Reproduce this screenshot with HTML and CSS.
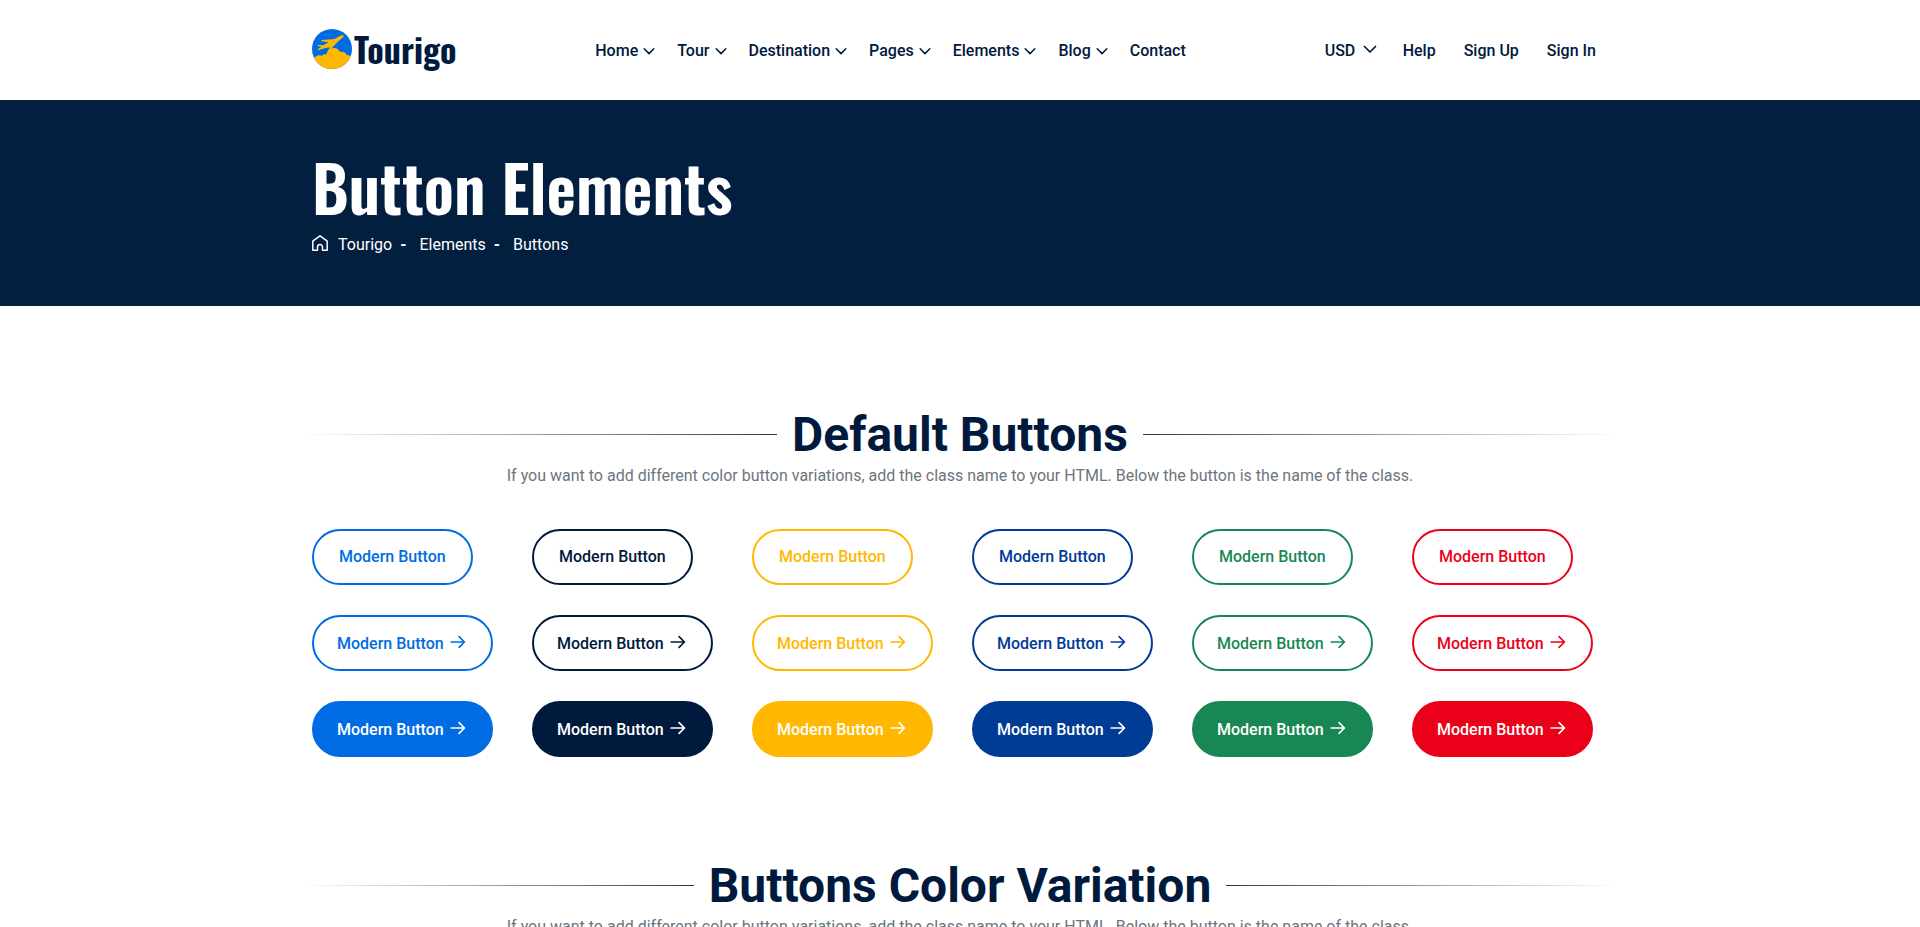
FILE: index.html
```
<!DOCTYPE html>
<html lang="en">
<head>
<meta charset="utf-8">
<meta name="viewport" content="width=device-width, initial-scale=1">
<title>Tourigo - Button Elements</title>
<link rel="stylesheet" href="styles.css">
</head>
<body>
<svg class="sprite" aria-hidden="true">
  <symbol id="chevron" viewBox="0 0 16 16"><path d="M2.5 5.5 8 11l5.500-5.500" fill="none" stroke="currentColor" stroke-width="1.700" stroke-linecap="round" stroke-linejoin="round"/></symbol>
  <symbol id="arrow" viewBox="0 0 16 16"><path d="M1.200 8H14.400M9.100 2.700 14.400 8 9.100 13.300" fill="none" stroke="currentColor" stroke-width="1.700" stroke-linecap="round" stroke-linejoin="round"/></symbol>
</svg>

<header class="header">
  <div class="container header-row">
    <a class="logo" href="#">
      <svg class="logo-mark" viewBox="0 0 40 40" aria-hidden="true">
        <defs><clipPath id="disc"><circle cx="20" cy="20" r="20"/></clipPath></defs>
        <g clip-path="url(#disc)">
          <rect width="40" height="40" fill="#006ce4"/>
          <path fill="#ffb700" d="M0 29.500C3 28 4 27 6 26.500c1.500-.500 3 0 4 .200 1-1.200 3-1.600 4.500-1.200C15 21 19 18.500 23 19c3 .500 4.500 2.500 5 4 3-1 6 .500 6.500 2.800 2 .200 3.500 1 5.500 2.500V40H0z"/>
          <path fill="#ffb700" d="M31.500 6.300c-1-.300-2.500.200-3.700.800l-5.300 3-12.700.9-1 .9 7.700 1.300-5.200 3.100-5.300-.300-.700.700 4.100 1.200-4.200 2.700 1.300.500 8-2.300 3.700-.400-2.700 3.500 1.500.100 9.300-9.800 4-3.100c1.200-1 1.800-2.300 1.200-2.800z"/>
        </g>
      </svg>
      <span class="logo-text">Tourigo</span>
    </a>
    <nav class="nav" aria-label="Main">
      <a href="#">Home <svg><use href="#chevron"/></svg></a>
      <a href="#">Tour <svg><use href="#chevron"/></svg></a>
      <a href="#">Destination <svg><use href="#chevron"/></svg></a>
      <a href="#">Pages <svg><use href="#chevron"/></svg></a>
      <a href="#">Elements <svg><use href="#chevron"/></svg></a>
      <a href="#">Blog <svg><use href="#chevron"/></svg></a>
      <a href="#">Contact</a>
    </nav>
    <div class="account">
      <label class="currency">
        <select aria-label="Currency"><option>USD</option></select>
        <svg><use href="#chevron"/></svg>
      </label>
      <a href="#">Help</a>
      <a href="#">Sign Up</a>
      <a href="#">Sign In</a>
    </div>
  </div>
</header>

<main>
  <section class="banner">
    <div class="container">
      <h1>Button Elements</h1>
      <nav class="crumbs" aria-label="Breadcrumb">
        <svg viewBox="0 0 16 16" aria-hidden="true"><path d="M8 .8.8 6.200v9h4.700V12a2.500 2.500 0 0 1 5 0v3.200h4.700v-9z" fill="none" stroke="currentColor" stroke-width="1.500" stroke-linejoin="round"/></svg>
        <a href="#">Tourigo</a><span class="dash">-</span>
        <a href="#">Elements</a><span class="dash">-</span>
        <span>Buttons</span>
      </nav>
    </div>
  </section>

  <section class="section">
    <h2>Default Buttons</h2>
    <p>If you want to add different color button variations, add the class name to your HTML. Below the button is the name of the class.</p>
    <div class="container button-grid">
      <button class="btn blue">Modern Button</button>
      <button class="btn navy">Modern Button</button>
      <button class="btn yellow">Modern Button</button>
      <button class="btn royal">Modern Button</button>
      <button class="btn green">Modern Button</button>
      <button class="btn red">Modern Button</button>

      <button class="btn icon blue">Modern Button <svg><use href="#arrow"/></svg></button>
      <button class="btn icon navy">Modern Button <svg><use href="#arrow"/></svg></button>
      <button class="btn icon yellow">Modern Button <svg><use href="#arrow"/></svg></button>
      <button class="btn icon royal">Modern Button <svg><use href="#arrow"/></svg></button>
      <button class="btn icon green">Modern Button <svg><use href="#arrow"/></svg></button>
      <button class="btn icon red">Modern Button <svg><use href="#arrow"/></svg></button>

      <button class="btn icon solid blue">Modern Button <svg><use href="#arrow"/></svg></button>
      <button class="btn icon solid navy">Modern Button <svg><use href="#arrow"/></svg></button>
      <button class="btn icon solid yellow">Modern Button <svg><use href="#arrow"/></svg></button>
      <button class="btn icon solid royal">Modern Button <svg><use href="#arrow"/></svg></button>
      <button class="btn icon solid green">Modern Button <svg><use href="#arrow"/></svg></button>
      <button class="btn icon solid red">Modern Button <svg><use href="#arrow"/></svg></button>
    </div>
  </section>

  <section class="section">
    <h2>Buttons Color Variation</h2>
    <p>If you want to add different color button variations, add the class name to your HTML. Below the button is the name of the class.</p>
  </section>
</main>
</body>
</html>
```
FILE: styles.css
```
* { box-sizing: border-box; }

html { overflow-x: hidden; scrollbar-width: none; }

body {
  margin: 0;
  background: #fff;
  color: #001a3d;
  font: 400 16px/24px Roboto, "Liberation Sans", sans-serif;
}

a { color: inherit; text-decoration: none; }

.sprite { display: none; }

.container {
  max-width: 1320px;
  margin: 0 auto;
  padding: 0 12px;
}

/* Header */
.header-row {
  display: flex;
  justify-content: space-between;
  align-items: center;
  height: 100px;
  font-weight: 500;
}

.logo { display: flex; align-items: center; gap: 2px; padding-bottom: 2px; }
.logo-mark { width: 40px; height: 40px; }
.logo-text {
  font: 700 34px/40px Oswald, "Liberation Sans Narrow", sans-serif;
}

.nav { display: flex; gap: 21px; padding-top: 2px; }
.nav a { display: flex; align-items: center; gap: 4px; }
.nav svg { width: 14px; height: 14px; }

.account {
  display: flex;
  gap: 28px;
  padding: 2px 12px 0 0;
}
.currency { display: flex; align-items: center; gap: 6px; margin-right: -3px; }
.currency svg { width: 16px; height: 16px; margin-bottom: 4px; }
.currency select {
  appearance: none;
  padding: 0;
  border: 0;
  background: none;
  color: inherit;
  font: inherit;
}

/* Page banner */
.banner {
  padding: 48px 0 49px;
  background: #031f3f;
  color: #fff;
}
.banner h1 {
  margin: 0 0 9px;
  font: 600 64px/76px Oswald, "Liberation Sans Narrow", sans-serif;
}
.crumbs { display: flex; align-items: center; }
.crumbs svg { width: 16px; height: 16px; margin: 0 10px 4px 0; }
.dash { margin: 0 13px 0 8px; font-weight: 700; }

/* Button sections */
.section { padding-top: 100px; text-align: center; }
.section h2 {
  display: flex;
  align-items: center;
  gap: 15px;
  max-width: 1320px;
  margin: 0 auto 1px;
  font: 700 48px/57px Roboto, "Liberation Sans", sans-serif;
}
.section h2::before,
.section h2::after {
  content: "";
  flex: 1;
  height: 1px;
  background: linear-gradient(to right, transparent, #343a40);
}
.section h2::after { background: linear-gradient(to left, transparent, #343a40); }
.section p { margin: 0; color: #6c757d; }

.button-grid {
  display: grid;
  grid-template-columns: repeat(6, 1fr);
  gap: 30px 24px;
  justify-items: start;
  padding-top: 41px;
}

.btn {
  display: flex;
  align-items: center;
  height: 56px;
  padding: 0 25px;
  border: 2px solid var(--tone);
  border-radius: 28px;
  background: transparent;
  color: var(--tone);
  font: 500 16px/24px Roboto, "Liberation Sans", sans-serif;
  white-space: nowrap;
  cursor: pointer;
}
.btn.icon { gap: 6px; padding: 2px 25px 0 23px; }
.btn svg { width: 16px; height: 16px; margin-bottom: 4px; }
.btn.solid { background: var(--tone); color: #fff; }

.blue { --tone: #006ce4; }
.navy { --tone: #001a3d; }
.yellow { --tone: #ffb700; }
.royal { --tone: #003b95; }
.green { --tone: #198754; }
.red { --tone: #eb0019; }
```
